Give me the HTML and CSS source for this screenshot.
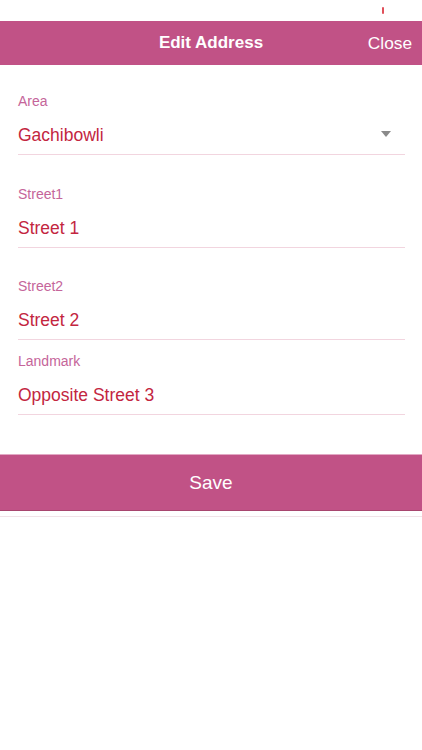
FILE: index.html
```html
<!DOCTYPE html>
<html>
<head>
<meta charset="utf-8">
<link rel="stylesheet" href="styles.css">
</head>
<body>
<div class="status"><span class="mark"></span></div>
<header class="bar">
  <div class="title">Edit Address</div>
  <div class="close">Close</div>
</header>
<main class="form">
  <div class="field f-area">
    <div class="label">Area</div>
    <div class="value select">
      <span>Gachibowli</span>
      <span class="caret"></span>
    </div>
  </div>
  <div class="field f-gap">
    <div class="label">Street1</div>
    <div class="value">Street 1</div>
  </div>
  <div class="field f-gap2">
    <div class="label">Street2</div>
    <div class="value">Street 2</div>
  </div>
  <div class="field f-tight">
    <div class="label">Landmark</div>
    <div class="value">Opposite Street 3</div>
  </div>
</main>
<div class="save">Save</div>
<div class="rule"></div>
</body>
</html>
```
FILE: styles.css
```css
* { box-sizing: border-box; }
html, body { margin: 0; padding: 0; background: #fff; }
body {
  width: 422px;
  font-family: "Liberation Sans", Arial, sans-serif;
}
.status {
  height: 21px;
  position: relative;
}
.mark {
  position: absolute;
  left: 382px;
  top: 7px;
  width: 2px;
  height: 7px;
  background: #e0505a;
  border-radius: 1px;
}
.bar {
  height: 44px;
  background: #c15286;
  display: flex;
  align-items: center;
  justify-content: center;
  position: relative;
  color: #fff;
}
.title {
  font-size: 17px;
  font-weight: bold;
}
.close {
  position: absolute;
  right: 10px;
  top: 0;
  line-height: 44px;
  font-size: 17.3px;
}
.form {
  padding: 0 17px 0 18px;
}
.field {
  border-bottom: 1px solid #f2d5df;
  padding-bottom: 8px;
}
.f-area { margin-top: 28px; }
.f-gap { margin-top: 31px; }
.f-gap2 { margin-top: 30px; }
.f-tight { margin-top: 13px; }
.label {
  font-size: 14px;
  line-height: 17px;
  color: #c5659a;
  margin-bottom: 14px;
}
.value {
  font-size: 17.5px;
  line-height: 22px;
  color: #c3263f;
}
.select {
  display: flex;
  justify-content: space-between;
  align-items: center;
}
.caret {
  width: 0;
  height: 0;
  border-left: 5px solid transparent;
  border-right: 5px solid transparent;
  border-top: 6px solid #8a8a8a;
  margin-right: 14px;
  margin-bottom: 2px;
}
.save {
  margin-top: 39px;
  height: 57px;
  background: #c15286;
  border-top: 1px solid #e2a9c4;
  border-bottom: 1px solid #a8466f;
  color: #fff;
  font-size: 19px;
  display: flex;
  align-items: center;
  justify-content: center;
}
.rule {
  margin-top: 5px;
  height: 1px;
  background: #f1e3e8;
}
```
